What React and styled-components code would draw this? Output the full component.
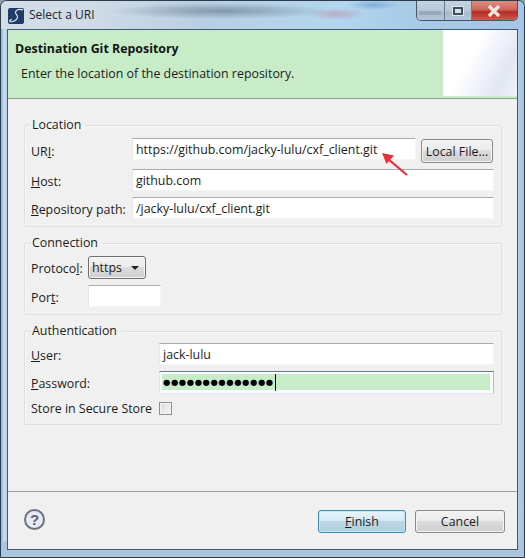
import React from 'react'
import styled, { createGlobalStyle } from 'styled-components'

const GlobalStyle = createGlobalStyle`
  html, body {
    margin: 0;
    padding: 0;
    background: #8a9aa8;
  }
  body {
    font-family: "Open Sans", "Noto Sans", sans-serif;
    font-size: 12.4px;
    color: #1c1c1c;
  }
`

const Frame = styled.div`
  width: 525px;
  height: 558px;
  box-sizing: border-box;
  display: flex;
  flex-direction: column;
  overflow: hidden;
  border: 1px solid #2b3c4c;
  border-radius: 7px 7px 0 0;
  background:
    linear-gradient(to bottom, transparent 540px, #a9c6de 540px),
    linear-gradient(
      to right,
      #8fb2d0 0,
      #c9def0 3px,
      #b7d2e8 6px,
      transparent 6px,
      transparent 517px,
      #b3cde6 517px,
      #a6c3e0 100%
    ),
    linear-gradient(
      to bottom,
      #e3edf5 0,
      #d4e2ee 130px,
      #7fa9cb 160px,
      #a9c8e2 300px,
      #b6cfe6 100%
    );
`

const TitleBar = styled.div`
  height: 28px;
  flex-shrink: 0;
  display: flex;
  align-items: flex-start;
  padding-left: 7px;
  background:
    radial-gradient(ellipse 30px 6px at 335px 13px, rgba(190, 130, 160, 0.5), transparent),
    radial-gradient(ellipse 26px 5px at 372px 4px, rgba(70, 130, 200, 0.45), transparent),
    radial-gradient(ellipse 112px 8px at 220px 10px, rgba(85, 105, 125, 0.55), transparent),
    linear-gradient(
      to right,
      #d3dde6 0,
      #cfdbe6 90px,
      #b9cfe2 200px,
      #b2d6ee 340px,
      #a9cbe6 410px,
      #a5c6e6 100%
    );
`

const AppIcon = styled.svg`
  width: 16px;
  height: 16px;
  margin-top: 7px;
  flex-shrink: 0;
`

const WindowTitle = styled.div`
  margin: 5px 0 0 5px;
  font-size: 12px;
  line-height: 17px;
  color: #20272e;
`

const WindowControls = styled.div`
  margin-left: auto;
  margin-right: 6px;
  width: 102px;
  height: 20px;
  display: flex;
  box-sizing: border-box;
  border: 1px solid #46566a;
  border-top: 0;
  border-radius: 0 0 5px 5px;
  overflow: hidden;
`

const ControlButton = styled.div`
  width: ${(p) => p.$width}px;
  display: flex;
  align-items: center;
  justify-content: center;
  border-right: ${(p) => (p.$last ? '0' : '1px solid #6c7c8c')};
  background: ${(p) =>
    p.$close
      ? 'linear-gradient(to bottom, #dc8f84 0, #d0665a 45%, #b52c20 58%, #cf5a4e 100%)'
      : 'linear-gradient(to bottom, #c6d4e2 0, #b8c8d8 50%, #a8bbce 60%, #b4c6d8 100%)'};
`

const MinimizeMark = styled.div`
  width: 22px;
  height: 4px;
  margin-top: 5px;
  background: #97a8ba;
`

const MaximizeMark = styled.div`
  box-sizing: border-box;
  width: 10px;
  height: 8px;
  border: 2px solid #414e5c;
  background: #d6e0ea;
  outline: 1px solid #dfe7ef;
`

const Client = styled.div`
  flex: 1;
  display: flex;
  flex-direction: column;
  margin: 0 6px 7px;
  border: 1px solid #3f5a72;
  background: #f0f0f0;
  min-height: 0;
  position: relative;
`

const Banner = styled.div`
  height: 68px;
  flex-shrink: 0;
  display: flex;
  background: #c8ecc8;
  border-bottom: 1px solid #8d9c90;
`

const BannerText = styled.div`
  flex: 1;
  padding: 10px 0 0 7px;
`

const BannerTitle = styled.div`
  font-weight: 700;
  line-height: 17px;
  color: #141414;
`

const BannerSubtitle = styled.div`
  margin: 8px 0 0 6px;
  line-height: 17px;
`

const BannerImage = styled.div`
  width: 74px;
  height: 66px;
  background: linear-gradient(118deg, #ffffff 38%, #eef0fa 62%, #e2e7f4 78%, #eef1f8 100%);
`

const Body = styled.div`
  padding: 18px 15px 0 16px;
  display: flex;
  flex-direction: column;
  gap: 8px;
`

const Group = styled.fieldset`
  margin: 0;
  padding: ${(p) => p.$top}px 7px 7px 6px;
  min-width: 0;
  border: 1px solid #dfdfdf;
  border-radius: 2px;
  box-shadow: inset 1px 1px 0 #f8f8f8;
  display: grid;
  grid-template-columns: ${(p) => p.$columns};
  row-gap: 6px;
  align-items: center;
`

const GroupTitle = styled.legend`
  padding: 0 4px 0 1px;
  line-height: 16px;
`

const Label = styled.label`
  line-height: 16px;
  padding-top: ${(p) => (p.$plain ? 1 : 3)}px;
`

const Mnemonic = styled.u`
  text-decoration-thickness: 1px;
`

const Field = styled.div`
  box-sizing: border-box;
  height: 22px;
  padding: 0 3px;
  line-height: 21px;
  background: #ffffff;
  border: 1px solid #f5f5f5;
  border-top-color: #ababab;
  border-left-color: #e6e6e6;
  width: ${(p) => (p.$width ? `${p.$width}px` : 'auto')};
`

const UriCell = styled.div`
  display: flex;
  align-items: flex-start;
  gap: 5px;
  grid-column: 2;
`

const UriField = styled(Field)`
  flex: 1;
`

const PasswordField = styled.div`
  box-sizing: border-box;
  height: 23px;
  padding: 2px 3px 3px 2px;
  background: #fbfdff;
  border: 1px solid #dce7f2;
  border-top-color: #5d7d9f;
  border-right-color: #a9bfd6;
`

const PasswordFill = styled.div`
  height: 100%;
  padding-left: 1px;
  display: flex;
  align-items: center;
  background: #c8ecc8;
`

const PasswordDots = styled.span`
  font-family: "DejaVu Sans", sans-serif;
  font-size: 8.4px;
  letter-spacing: 0.6px;
  line-height: 17px;
  color: #000000;
  padding-right: 1px;
  border-right: 1px solid #000000;
`

const Button = styled.div`
  box-sizing: border-box;
  height: ${(p) => p.$height || 23}px;
  width: ${(p) => p.$width}px;
  display: flex;
  align-items: center;
  justify-content: center;
  border: 1px solid ${(p) => (p.$primary ? '#3c8cab' : '#8a8a8a')};
  border-radius: 3px;
  color: #1c1c1c;
  background: ${(p) =>
    p.$primary
      ? 'linear-gradient(to bottom, #e9f5fb 0, #d5eaf5 45%, #bcd6e4 50%, #b3d0e0 100%)'
      : 'linear-gradient(to bottom, #f3f3f3 0, #ebebeb 45%, #dcdcdc 50%, #cfcfcf 100%)'};
  box-shadow: inset 0 0 0 1px ${(p) => (p.$primary ? '#bfeaf8' : '#f4f4f4')};
`

const LocalFileButton = styled(Button)`
  margin: 1px 1px 0 0;
`

const ProtocolSelect = styled(Button)`
  justify-content: space-between;
  padding: 0 6px 0 3px;
  border-color: #6f6f6f;
`

const SelectArrow = styled.div`
  width: 0;
  height: 0;
  border-left: 4px solid transparent;
  border-right: 4px solid transparent;
  border-top: 4px solid #222222;
`

const Checkbox = styled.div`
  box-sizing: border-box;
  width: 13px;
  height: 13px;
  border: 1px solid #8e8f8f;
  background: linear-gradient(135deg, #dcdcdc, #f6f6f6);
  box-shadow: inset 0 0 0 1px #f4f4f4;
`

const Footer = styled.div`
  margin-top: auto;
  height: 58px;
  flex-shrink: 0;
  box-sizing: border-box;
  display: flex;
  align-items: flex-start;
  padding: 18px 12px 0 16px;
  gap: 9px;
  border-top: 1px solid #a0a0a0;
`

const HelpButton = styled.div`
  box-sizing: border-box;
  width: 21px;
  height: 21px;
  margin: -1px auto 0 0;
  border: 2px solid #6d7280;
  border-radius: 50%;
  background: #e6ebf4;
  color: #5f6472;
  font-family: "Liberation Sans", sans-serif;
  font-size: 15px;
  font-weight: 700;
  line-height: 17px;
  text-align: center;
`

const Arrow = styled.svg`
  position: absolute;
  left: 368px;
  top: 118px;
  width: 36px;
  height: 28px;
`

const AppLogo = () => (
  <AppIcon viewBox="0 0 16 16">
    <rect width="16" height="16" rx="2" fill="#1d3c66" />
    <path
      d="M15 2C11 0.5 7.5 2 7.5 4.5c0 2 2.5 2.5 2 5C9 12 5 14.5 2 13.5c-1-.5 0-2 2-2"
      fill="none"
      stroke="#eef3f9"
      strokeWidth="1.1"
    />
  </AppIcon>
)

export default function App() {
  return (
    <>
      <GlobalStyle />
      <Frame>
        <TitleBar>
          <AppLogo />
          <WindowTitle>Select a URI</WindowTitle>
          <WindowControls>
            <ControlButton $width={28}>
              <MinimizeMark />
            </ControlButton>
            <ControlButton $width={27}>
              <MaximizeMark />
            </ControlButton>
            <ControlButton $width={47} $close $last>
              <svg width="16" height="14" viewBox="0 0 16 14">
                <path d="M3 2l10 10M13 2L3 12" stroke="#f0e6e0" strokeWidth="3.2" />
              </svg>
            </ControlButton>
          </WindowControls>
        </TitleBar>
        <Client>
          <Banner>
            <BannerText>
              <BannerTitle>Destination Git Repository</BannerTitle>
              <BannerSubtitle>Enter the location of the destination repository.</BannerSubtitle>
            </BannerText>
            <BannerImage />
          </Banner>
          <Body>
            <Group $columns="101px 1fr" $top={5}>
              <GroupTitle>Location</GroupTitle>
              <Label>
                UR<Mnemonic>I</Mnemonic>:
              </Label>
              <UriCell>
                <UriField>https://github.com/jacky-lulu/cxf_client.git</UriField>
                <LocalFileButton $width={72} $height={24}>
                  Local File...
                </LocalFileButton>
              </UriCell>
              <Label>
                <Mnemonic>H</Mnemonic>ost:
              </Label>
              <Field>github.com</Field>
              <Label>
                <Mnemonic>R</Mnemonic>epository path:
              </Label>
              <Field>/jacky-lulu/cxf_client.git</Field>
            </Group>
            <Group $columns="57px 1fr" $top={5}>
              <GroupTitle>Connection</GroupTitle>
              <Label>
                Protoco<Mnemonic>l</Mnemonic>:
              </Label>
              <ProtocolSelect $width={58}>
                https
                <SelectArrow />
              </ProtocolSelect>
              <Label>
                Por<Mnemonic>t</Mnemonic>:
              </Label>
              <Field $width={73} />
            </Group>
            <Group $columns="128px 1fr" $top={4}>
              <GroupTitle>Authentication</GroupTitle>
              <Label>
                <Mnemonic>U</Mnemonic>ser:
              </Label>
              <Field>jack-lulu</Field>
              <Label>
                <Mnemonic>P</Mnemonic>assword:
              </Label>
              <PasswordField>
                <PasswordFill>
                  <PasswordDots>●●●●●●●●●●●●●●</PasswordDots>
                </PasswordFill>
              </PasswordField>
              <Label $plain>Store in Secure Store</Label>
              <Checkbox />
            </Group>
          </Body>
          <Footer>
            <HelpButton>?</HelpButton>
            <Button $primary $width={88}>
              <span>
                <Mnemonic>F</Mnemonic>inish
              </span>
            </Button>
            <Button $width={90}>Cancel</Button>
          </Footer>
          <Arrow viewBox="0 0 36 28">
            <path d="M31 27L12 11" stroke="#e8303a" strokeWidth="2.2" fill="none" />
            <path d="M6 5l12 2.5-7.5 8.5z" fill="#e8303a" />
          </Arrow>
        </Client>
      </Frame>
    </>
  )
}
